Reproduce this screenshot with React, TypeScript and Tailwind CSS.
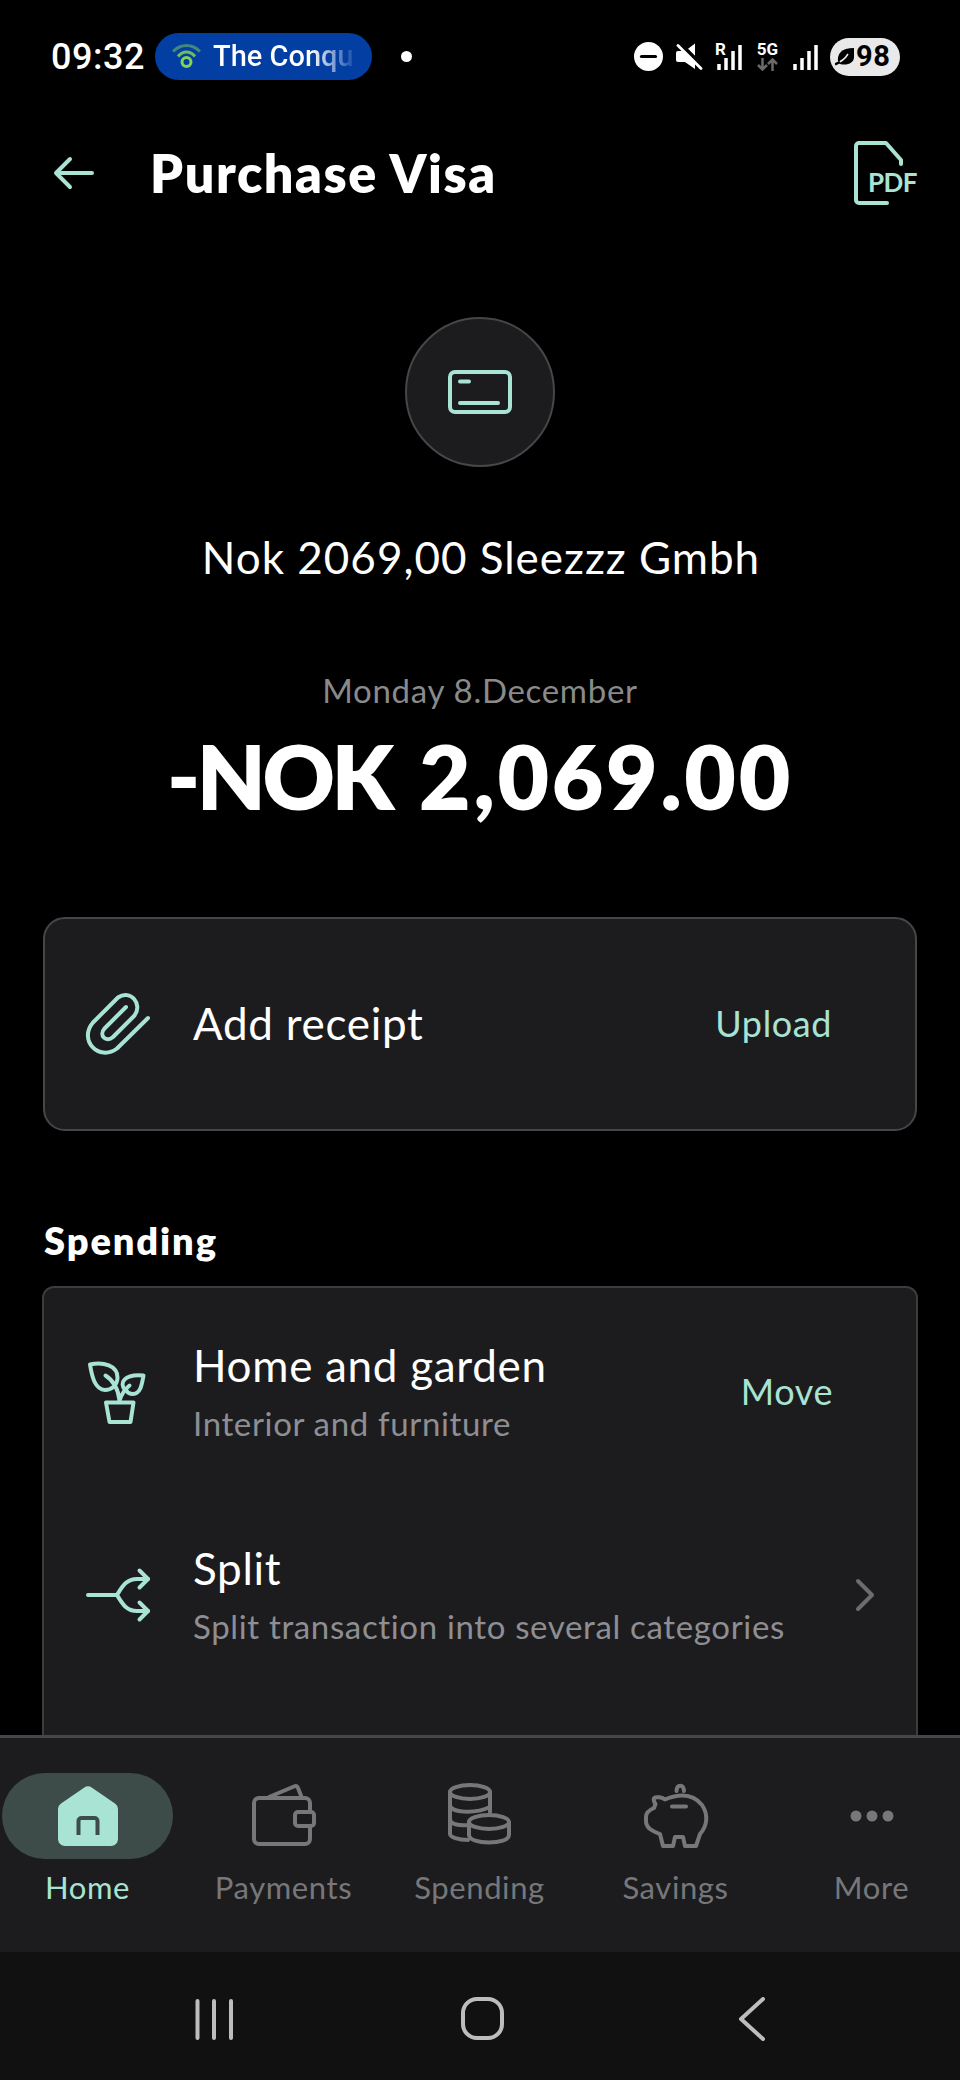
import { ReactNode } from 'react';

const mint = 'text-[#a8e3d3]';

function Icon({ children, className = '' }: { children: ReactNode; className?: string }) {
  return (
    <svg
      viewBox="0 0 66 66"
      fill="none"
      stroke="currentColor"
      strokeWidth="4"
      strokeLinecap="round"
      strokeLinejoin="round"
      className={`h-[66px] w-[66px] shrink-0 ${className}`}
    >
      {children}
    </svg>
  );
}

function CardIcon() {
  return (
    <Icon>
      <rect x="3" y="13" width="60" height="40" rx="5" />
      <path d="M13 22.5h9M13 44h38" />
    </Icon>
  );
}

function PaperclipIcon() {
  return (
    <Icon className="-translate-x-px -translate-y-px">
      <path d="M42 17 20.500 38.500c-6 7 1.500 14.500 8.500 8.500l21.500-21.500C59 14 46.500-1 34 7.500L9 32.500C-6 50 15 72 33 58.500L64 28" />
    </Icon>
  );
}

function PlantIcon() {
  return (
    <Icon>
      <path d="M5 5.500c13-3 28 1 27.500 13.500C32 27 26 31 20 31 10 30.500 7 18 5 5.500Z" />
      <path d="M20.500 16.500c8 5 12.500 12 14 25 2-6 5-11 10-15" />
      <path d="M40 31c-6-7-1-16.500 18.500-14.500C57 24 56 35 48 35c-4 0-6-2-7-4" />
      <path d="M21 43.500h27.500L45.500 63h-21z" />
    </Icon>
  );
}

function SplitIcon() {
  return (
    <Icon>
      <path d="M3 33h29c5-8 9-16 20-16h11M32 33c5 8 9 16 20 16h11" />
      <path d="m54.500 8.500 8.500 8.500-8.500 8.500M54.500 40.500 63 49l-8.500 8.500" />
    </Icon>
  );
}

function HomeIcon() {
  return (
    <Icon>
      <path
        fill="currentColor"
        stroke="none"
        d="M29 4.700a7 7 0 0 1 8 0L60 20.500a7 7 0 0 1 3 5.500V56a7 7 0 0 1-7 7H10a7 7 0 0 1-7-7V26a7 7 0 0 1 3-5.500Z"
      />
      <path
        d="M23.500 52V38a3 3 0 0 1 3-3h13a3 3 0 0 1 3 3v14"
        stroke="#3d4c48"
        strokeLinecap="butt"
      />
    </Icon>
  );
}

function WalletIcon() {
  return (
    <Icon className="-translate-y-px">
      <rect x="3" y="16" width="56" height="46" rx="5" />
      <path d="M18 15 43 4.500q3-1.500 4 1.500l4 10" />
      <rect x="44" y="30" width="19" height="14" rx="3" fill="#1c1c1e" />
    </Icon>
  );
}

function CoinsIcon() {
  return (
    <Icon className="-translate-x-px -translate-y-px">
      <ellipse cx="24" cy="10" rx="20" ry="7" />
      <path d="M4 10v42c0 3 8 6 18 6M44 10v20M4 23c0 8 25 9 40 2M4 37c0 5 8 7 19 6" />
      <ellipse cx="43" cy="40" rx="20" ry="7" />
      <path d="M23 40v13c0 10 40 10 40 0V40" />
    </Icon>
  );
}

function PiggyIcon() {
  return (
    <Icon className="-translate-y-px">
      <path d="M22 17.500C38 11 51 13 59 23c6 9 6 20-2 29l-4 12H42l-2-9H32l-2 9H20l-3-12C9 49 3 46 3 39v-4c0-5 3-7 8-9l1.500-4c-2-3-2.500-5.500-.5-6.500 2-.7 7-.5 10 2Z" />
      <path d="M29 24.500h14M33.500 9c.5-7 7-7 7.500 0" />
    </Icon>
  );
}

function MoreIcon() {
  return (
    <Icon>
      <g fill="currentColor" stroke="none">
        <circle cx="17" cy="33" r="5.500" />
        <circle cx="33" cy="33" r="5.500" />
        <circle cx="49" cy="33" r="5.500" />
      </g>
    </Icon>
  );
}

function Signal() {
  return (
    <svg width="25" height="26" viewBox="0 0 25 26" fill="none" stroke="#fff" strokeWidth="3.500">
      <path d="M2 20v6M9 14v12M16 7v19M23 1v25" />
    </svg>
  );
}

function StatusBar() {
  return (
    <div className="flex h-[113px] shrink-0 items-center pl-[51px] font-['Roboto',sans-serif] font-medium">
      <span className="w-[104px] text-[36px] tracking-[0.5px]">09:32</span>
      <div className="flex h-[47px] w-[217px] items-center rounded-full bg-[#033ea3] pl-[17px]">
        <svg width="29" height="25" viewBox="0 0 29 25" fill="none" stroke="#83d256" strokeWidth="3">
          <circle cx="14.500" cy="18" r="4.500" />
          <path d="M6 12.500c5-6 12-6 17 0" opacity=".85" />
          <path d="M1 7.500c8-8 19-8 27 0" opacity=".5" />
        </svg>
        <span className="ml-3 w-[140px] overflow-hidden bg-linear-to-r from-white from-70% to-white/10 bg-clip-text text-[29px] whitespace-nowrap text-transparent">
          The Conqu
        </span>
      </div>
      <span className="ml-[29px] h-[11px] w-[11px] rounded-full bg-white" />
      <svg className="ml-[222px]" width="29" height="29" viewBox="0 0 29 29">
        <circle cx="14.500" cy="14.500" r="14.500" fill="#fff" />
        <path d="M7.500 14.500h14" stroke="#000" strokeWidth="3.200" strokeLinecap="round" />
      </svg>
      <svg className="ml-[13px]" width="27" height="27" viewBox="0 0 27 27">
        <path d="M2 8h7l10-7.500V26L9 19H2Q0 19 0 17v-7Q0 8 2 8Z" fill="#fff" />
        <path d="M3.500 0 28 24.500" stroke="#000" strokeWidth="4" />
        <path d="M2 2.500 25 25.500" stroke="#fff" strokeWidth="2.800" strokeLinecap="round" />
      </svg>
      <div className="relative ml-[14px]">
        <Signal />
        <span className="absolute top-[-2px] -left-[2px] bg-black text-[17px] leading-[14px] font-bold">
          R
        </span>
      </div>
      <div className="ml-[14px] flex h-[30px] w-[23px] flex-col items-center">
        <span className="text-[17px] leading-[15px] font-bold">5G</span>
        <svg className="mt-px" width="21" height="13" viewBox="0 0 21 13" fill="none" stroke="#6a6a6a" strokeWidth="2.500">
          <path d="M5.500 0v11M1 7l4.500 4.500L10 7M15.500 13V2M11 6l4.500-4.500L20 6" />
        </svg>
      </div>
      <div className="ml-[14px]">
        <Signal />
      </div>
      <div className="ml-[12px] flex h-[38px] w-[70px] items-center rounded-full bg-[#e9e9e9] pl-[5px] text-black">
        <svg width="20" height="18" viewBox="0 0 20 18">
          <path d="M19 0v9c0 6-7 9-14 7l-2-2C2 6 6 0 19 0Z" fill="#000" />
          <path d="M13 6C10 11 6 14 0 16" stroke="#e9e9e9" strokeWidth="1.500" fill="none" />
          <path d="M0 16.500 5 14" stroke="#000" strokeWidth="2.500" />
        </svg>
        <span className="ml-px text-[29px] font-bold tracking-[0.5px]">98</span>
      </div>
    </div>
  );
}

function Header() {
  return (
    <header className="flex h-[120px] items-center pr-[43px] pl-[53px]">
      <svg
        className={mint}
        width="42"
        height="34"
        viewBox="0 0 42 34"
        fill="none"
        stroke="currentColor"
        strokeWidth="4"
        strokeLinecap="round"
        strokeLinejoin="round"
      >
        <path d="M39 17H3M17 3 3 17l14 14" />
      </svg>
      <h1 className="ml-[55px] text-[52px] font-extrabold tracking-[1.6px]">Purchase Visa</h1>
      <div className={`relative ml-auto ${mint}`}>
        <svg
          width="63"
          height="64"
          viewBox="0 0 63 64"
          fill="none"
          stroke="currentColor"
          strokeWidth="4"
          strokeLinecap="round"
          strokeLinejoin="round"
        >
          <path d="M47 23v-4L32 2H5a3 3 0 0 0-3 3v54a3 3 0 0 0 3 3h28" />
        </svg>
        <span className="absolute top-[27px] left-[14px] text-[26px] leading-[28px] font-bold tracking-[-0.6px]">
          PDF
        </span>
      </div>
    </header>
  );
}

type RowProps = {
  icon: ReactNode;
  title: string;
  subtitle?: string;
  action?: string;
};

function Row({ icon, title, subtitle, action }: RowProps) {
  return (
    <>
      <span className={mint}>{icon}</span>
      <div className="ml-[42px] flex flex-col gap-[8px] pb-[2px]">
        <span className="text-[44px] leading-[56px] tracking-[0.7px]">{title}</span>
        {subtitle && (
          <span className="text-[33px] leading-[44px] tracking-[0.65px] text-[#8e8e93]">
            {subtitle}
          </span>
        )}
      </div>
      {action ? (
        <button className={`mr-[83px] ml-auto pb-[2px] text-[36px] tracking-[0.6px] ${mint}`}>
          {action}
        </button>
      ) : (
        <svg
          className="mr-[41px] ml-auto"
          width="20"
          height="34"
          viewBox="0 0 20 34"
          fill="none"
          stroke="#6c6c70"
          strokeWidth="4"
          strokeLinecap="round"
          strokeLinejoin="round"
        >
          <path d="m3 3 14 14L3 31" />
        </svg>
      )}
    </>
  );
}

const tabs = [
  { label: 'Home', icon: <HomeIcon />, active: true },
  { label: 'Payments', icon: <WalletIcon /> },
  { label: 'Spending', icon: <CoinsIcon /> },
  { label: 'Savings', icon: <PiggyIcon /> },
  { label: 'More', icon: <MoreIcon /> }
];

function TabBar() {
  return (
    <nav className="flex h-[217px] shrink-0 justify-center border-t-[3px] border-[#464648] bg-[#1c1c1e] pr-[1px]">
      {tabs.map((tab) => (
        <div
          key={tab.label}
          className={`flex w-[196px] shrink-0 flex-col items-center pt-[35px] ${
            tab.active ? mint : 'text-[#77777a]'
          }`}
        >
          <div
            className={`flex h-[86px] w-[171px] items-center justify-center rounded-full ${
              tab.active ? 'bg-[#3d4c48]' : ''
            }`}
          >
            {tab.icon}
          </div>
          <span className="mt-[8px] text-[31px] leading-[40px] tracking-[0.6px]">{tab.label}</span>
        </div>
      ))}
    </nav>
  );
}

function SystemBar() {
  return (
    <div className="flex h-[128px] shrink-0 items-center bg-[#111111] pt-[5px] pl-[195px]">
      <svg width="38" height="44" viewBox="0 0 38 44" stroke="#bdbdbd" strokeWidth="4" strokeLinecap="round">
        <path d="M2.500 4v37M19 4v37M36 4v37" />
      </svg>
      <svg className="ml-[228px]" width="43" height="43" viewBox="0 0 43 43" fill="none" stroke="#bdbdbd" strokeWidth="4">
        <rect x="2" y="2" width="39" height="39" rx="14" />
      </svg>
      <svg
        className="ml-[234px]"
        width="28"
        height="44"
        viewBox="0 0 28 44"
        fill="none"
        stroke="#bdbdbd"
        strokeWidth="4"
        strokeLinecap="round"
        strokeLinejoin="round"
      >
        <path d="M25 2 3 22l22 20" />
      </svg>
    </div>
  );
}

export default function App() {
  return (
    <div className="flex h-[2080px] w-[960px] flex-col overflow-hidden bg-black font-['Lato',sans-serif] text-white">
      <StatusBar />
      <main className="min-h-0 flex-1 overflow-hidden">
        <Header />
        <section className="flex flex-col items-center">
          <div
            className={`mt-[84px] flex h-[150px] w-[150px] items-center justify-center rounded-full border-2 border-[#464648] bg-[#1c1c1e] ${mint}`}
          >
            <CardIcon />
          </div>
          <p className="mt-[64px] pl-[2px] text-[44px] leading-[52px] tracking-[1px]">
            Nok 2069,00 Sleezzz Gmbh
          </p>
          <p className="mt-[87px] text-[33px] leading-[40px] tracking-[0.7px] text-[#8a8a8a]">
            Monday 8.December
          </p>
          <p className="mt-[16px] text-[89px] leading-[100px] font-extrabold tracking-[2.7px] [word-spacing:5px]">
            <span className="tracking-[-3.5px]">-NOK</span> 2,069.00
          </p>
        </section>
        <section className="mx-[43px] mt-[91px] flex h-[214px] items-center rounded-[22px] border-2 border-[#464648] bg-[#1c1c1e] pl-[40px]">
          <Row icon={<PaperclipIcon />} title="Add receipt" action="Upload" />
        </section>
        <h2 className="mt-[86px] ml-[44px] text-[38px] leading-[46px] font-extrabold tracking-[1.9px]">
          Spending
        </h2>
        <section className="mx-[42px] mt-[23px] h-[600px] rounded-[12px] border-2 border-[#3c3c3e] bg-[#1c1c1e] pl-[41px]">
          <div className="flex h-[208px] items-center">
            <Row
              icon={<PlantIcon />}
              title="Home and garden"
              subtitle="Interior and furniture"
              action="Move"
            />
          </div>
          <div className="flex h-[198px] items-center">
            <Row
              icon={<SplitIcon />}
              title="Split"
              subtitle="Split transaction into several categories"
            />
          </div>
        </section>
      </main>
      <TabBar />
      <SystemBar />
    </div>
  );
}
